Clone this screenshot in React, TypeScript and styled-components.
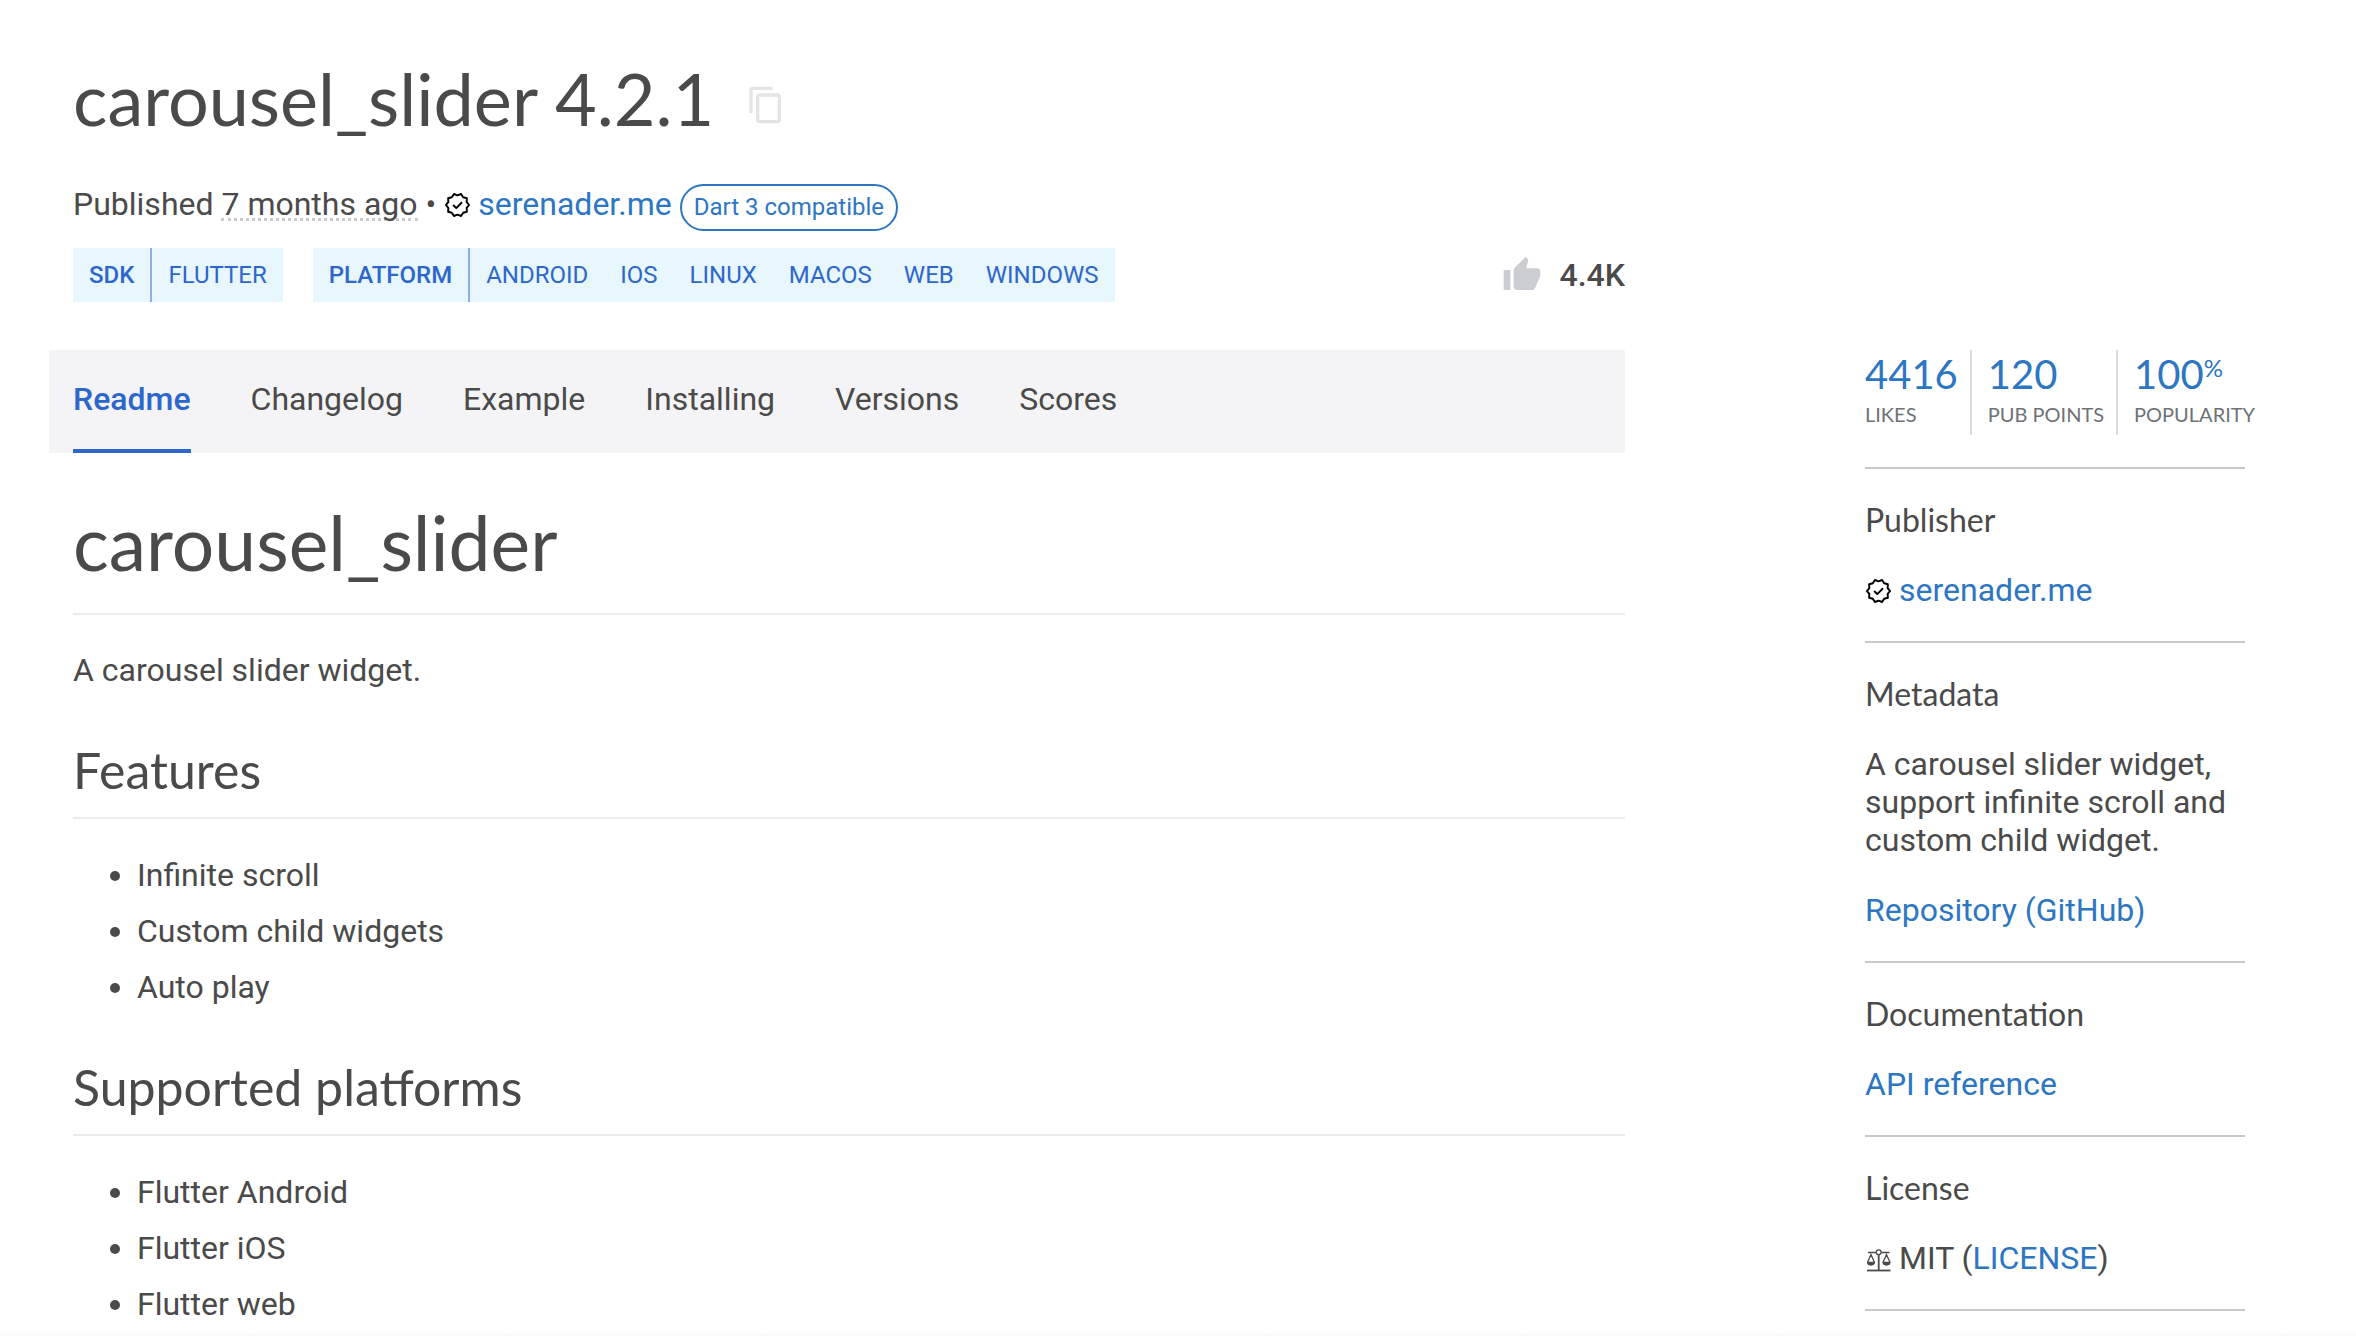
import React from "react";
import styled, { createGlobalStyle, css } from "styled-components";

const color = {
  text: "#4a4a4a",
  link: "#2d76c2",
  accent: "#2d67cc",
  chip: "#e8f6fe",
  chipLine: "#8dafe3",
  tabs: "#f4f4f6",
  rule: "#eaebef",
  sideRule: "#c7c8c9",
  statRule: "#dcdcdc",
  label: "#6e7277",
};

const display = `Lato, "Open Sans", sans-serif`;

const GlobalStyle = createGlobalStyle`
  * { box-sizing: border-box; }
  body {
    margin: 0;
    background: #fff;
    color: ${color.text};
    font: 400 32px/38px Roboto, "Noto Sans", sans-serif;
  }
  h1, h2, h3, p, ul, dl, dd { margin: 0; padding: 0; }
`;

const Page = styled.div`
  min-height: 100vh;
  display: flex;
  flex-direction: column;
`;

const Columns = styled.div`
  flex: 1;
  display: flex;
  align-items: flex-start;
  gap: 240px;
  padding: 55px 111px 0 49px;
`;

const Main = styled.main`
  flex: 1;
  min-width: 0;
`;

const Header = styled.header`
  padding-left: 24px;
`;

const TitleRow = styled.div`
  display: flex;
  align-items: center;
  gap: 32px;
`;

const Title = styled.h1`
  font: 400 72px/86px ${display};
`;

const CopyButton = styled.button`
  display: flex;
  padding: 0;
  margin-top: 14px;
  border: 0;
  background: none;
  color: #e4e4e4;
  cursor: pointer;
`;

const Link = styled.a`
  color: ${color.link};
  text-decoration: none;
`;

const Meta = styled.div`
  display: flex;
  align-items: baseline;
  gap: 8px;
  margin-top: 43px;
`;

const Age = styled.abbr`
  text-decoration: none;
  border-bottom: 3px dotted #cbcbcb;
  line-height: 28px;
  display: inline-block;
`;

const PublisherLink = styled(Link)`
  display: inline-flex;
  align-items: baseline;
  gap: 7px;

  svg {
    align-self: center;
    margin-top: 2px;
  }
`;

const Pill = styled.a`
  padding: 0 12px;
  border: 2px solid ${color.link};
  border-radius: 24px;
  color: ${color.link};
  font-size: 24px;
  line-height: 43px;
  text-decoration: none;
`;

const TagRow = styled.div`
  display: flex;
  align-items: center;
  gap: 30px;
  margin-top: 17px;
`;

const TagGroup = styled.div`
  display: flex;
  background: ${color.chip};
  color: ${color.accent};
  font-size: 24px;
  line-height: 54px;
`;

const TagName = styled.span`
  padding: 0 16px;
  border-right: 2px solid ${color.chipLine};
  font-weight: 500;
`;

const Tag = styled.a`
  padding: 0 16px;
  color: inherit;
  text-decoration: none;
`;

const LikeButton = styled.button`
  display: flex;
  align-items: center;
  gap: 18px;
  margin-left: auto;
  padding: 0;
  border: 0;
  background: none;
  color: inherit;
  font: inherit;
  font-weight: 500;
  cursor: pointer;
`;

const Tabs = styled.nav`
  display: flex;
  gap: 60px;
  margin-top: 48px;
  padding: 0 24px;
  background: ${color.tabs};
`;

const Tab = styled.a<{ $active?: boolean }>`
  padding: 30px 0 31px;
  border-bottom: 4px solid transparent;
  color: inherit;
  text-decoration: none;
  ${(p) =>
    p.$active &&
    css`
      border-color: ${color.accent};
      color: ${color.accent};
      font-weight: 500;
    `}
`;

const Readme = styled.article`
  padding: 46px 0 0 24px;
`;

const ReadmeTitle = styled.h1`
  padding-bottom: 28px;
  border-bottom: 2px solid ${color.rule};
  font: 400 75px/86px ${display};
`;

const Lead = styled.p`
  margin-top: 31px;
  line-height: 48px;
`;

const ReadmeHeading = styled.h2`
  margin-top: 47px;
  padding-bottom: 18px;
  border-bottom: 2px solid ${color.rule};
  font: 400 50px/58px ${display};
`;

const Bullets = styled.ul`
  display: flex;
  flex-direction: column;
  gap: 8px;
  margin-top: 32px;
  padding-left: 64px;
  line-height: 48px;
`;

const Sidebar = styled.aside`
  flex: none;
  width: 380px;
  padding-top: 295px;
`;

const Stats = styled.dl`
  display: flex;
  height: 85px;
  margin-bottom: 32px;
  font-family: ${display};
`;

const Stat = styled.div`
  display: flex;
  flex-direction: column-reverse;
  justify-content: flex-end;
  padding-right: 12px;
  white-space: nowrap;
  & + & {
    padding-left: 16px;
    border-left: 2px solid ${color.statRule};
  }
`;

const StatLabel = styled.dt`
  color: ${color.label};
  font-size: 20px;
  line-height: 32px;
`;

const StatValue = styled.dd`
  color: ${color.link};
  font-size: 40px;
  line-height: 48px;
`;

const Percent = styled.span`
  font-size: 24px;
  line-height: 24px;
  vertical-align: 12px;
`;

const Section = styled.section`
  display: flex;
  flex-direction: column;
  align-items: flex-start;
  gap: 32px;
  padding: 32px 0;
  border-top: 2px solid ${color.sideRule};
  &:last-child {
    border-bottom: 2px solid ${color.sideRule};
  }
`;

const SectionTitle = styled.h3`
  font: 400 32px/38px ${display};
`;

const IconLine = styled.div`
  display: flex;
  align-items: center;
  gap: 7px;
`;

const BottomEdge = styled.div`
  height: 5px;
  background: linear-gradient(#fff, #f8f8f8);
`;

const starburst = Array.from({ length: 20 }, (_, i) => {
  const angle = (i * Math.PI) / 10;
  const r = i % 2 ? 10 : 12;
  return `${(14 + r * Math.cos(angle)).toFixed(2)},${(14 + r * Math.sin(angle)).toFixed(2)}`;
}).join(" ");

const VerifiedIcon = () => (
  <svg width="27" height="28" viewBox="0 0 28 28" fill="none" stroke="#000" strokeWidth="2" strokeLinejoin="round" aria-hidden="true">
    <polygon points={starburst} />
    <path d="M9.5 14l3.2 3.2 6-6" />
  </svg>
);

const CopyIcon = () => (
  <svg width="40" height="40" viewBox="0 0 24 24" fill="currentColor" aria-hidden="true">
    <path d="M16 1H4c-1.1 0-2 .9-2 2v14h2V3h12V1zm3 4H8c-1.1 0-2 .9-2 2v14c0 1.1.9 2 2 2h11c1.1 0 2-.9 2-2V7c0-1.1-.9-2-2-2zm0 16H8V7h11v14z" />
  </svg>
);

const ThumbIcon = () => (
  <svg width="40" height="40" viewBox="0 0 24 24" fill="#cccdd2" aria-hidden="true">
    <path d="M1 21h4V9H1v12zm22-11c0-1.1-.9-2-2-2h-6.31l.95-4.57.03-.32c0-.41-.17-.79-.44-1.06L14.17 1 7.59 7.59C7.22 7.95 7 8.45 7 9v10c0 1.1.9 2 2 2h9c.83 0 1.54-.5 1.84-1.22l3.02-7.05c.09-.23.14-.47.14-.73v-2z" />
  </svg>
);

const ScalesIcon = () => (
  <svg width="27" height="28" viewBox="0 0 27 28" fill="none" stroke={color.text} strokeWidth="1.3" aria-hidden="true">
    <path d="M2 26.5h23.500" strokeWidth="1.800" />
    <path d="M13.700 11v15" strokeWidth="1.800" />
    <path d="M3 8.500h8M16.500 8.500h8" strokeWidth="1.500" />
    <circle cx="13.700" cy="8.200" r="2.400" />
    <path d="M6 10.500L2.700 18c0 3.800 6.600 3.800 6.600 0zM21.500 10.500L18.200 18c0 3.800 6.600 3.800 6.600 0z" />
    <path d="M2.700 18.300h6.600c-.3 3.300-6.300 3.300-6.600 0zM18.200 18.300h6.600c-.3 3.300-6.300 3.300-6.600 0z" fill={color.text} />
  </svg>
);

const tagGroups = [
  { name: "SDK", tags: ["FLUTTER"] },
  { name: "PLATFORM", tags: ["ANDROID", "IOS", "LINUX", "MACOS", "WEB", "WINDOWS"] },
];

const tabs = ["Readme", "Changelog", "Example", "Installing", "Versions", "Scores"];

const readmeSections = [
  { heading: "Features", items: ["Infinite scroll", "Custom child widgets", "Auto play"] },
  { heading: "Supported platforms", items: ["Flutter Android", "Flutter iOS", "Flutter web"] },
];

const Publisher = () => (
  <PublisherLink href="#publisher">
    <VerifiedIcon />
    serenader.me
  </PublisherLink>
);

export default function App() {
  return (
    <Page>
      <GlobalStyle />
      <Columns>
        <Main>
          <Header>
            <TitleRow>
              <Title>carousel_slider 4.2.1</Title>
              <CopyButton type="button" aria-label="Copy">
                <CopyIcon />
              </CopyButton>
            </TitleRow>
            <Meta>
              <span>
                Published <Age>7 months ago</Age> •
              </span>
              <Publisher />
              <Pill href="#dart3">Dart 3 compatible</Pill>
            </Meta>
            <TagRow>
              {tagGroups.map((group) => (
                <TagGroup key={group.name}>
                  <TagName>{group.name}</TagName>
                  {group.tags.map((tag) => (
                    <Tag key={tag} href="#tag">
                      {tag}
                    </Tag>
                  ))}
                </TagGroup>
              ))}
              <LikeButton type="button">
                <ThumbIcon />
                4.4K
              </LikeButton>
            </TagRow>
          </Header>
          <Tabs>
            {tabs.map((tab, i) => (
              <Tab key={tab} href="#tab" $active={i === 0}>
                {tab}
              </Tab>
            ))}
          </Tabs>
          <Readme>
            <ReadmeTitle>carousel_slider</ReadmeTitle>
            <Lead>A carousel slider widget.</Lead>
            {readmeSections.map((section) => (
              <React.Fragment key={section.heading}>
                <ReadmeHeading>{section.heading}</ReadmeHeading>
                <Bullets>
                  {section.items.map((item) => (
                    <li key={item}>{item}</li>
                  ))}
                </Bullets>
              </React.Fragment>
            ))}
          </Readme>
        </Main>
        <Sidebar>
          <Stats>
            <Stat>
              <StatLabel>LIKES</StatLabel>
              <StatValue>4416</StatValue>
            </Stat>
            <Stat>
              <StatLabel>PUB POINTS</StatLabel>
              <StatValue>120</StatValue>
            </Stat>
            <Stat>
              <StatLabel>POPULARITY</StatLabel>
              <StatValue>
                100<Percent>%</Percent>
              </StatValue>
            </Stat>
          </Stats>
          <Section>
            <SectionTitle>Publisher</SectionTitle>
            <Publisher />
          </Section>
          <Section>
            <SectionTitle>Metadata</SectionTitle>
            <p>A carousel slider widget, support infinite scroll and custom child widget.</p>
            <Link href="#repository">Repository (GitHub)</Link>
          </Section>
          <Section>
            <SectionTitle>Documentation</SectionTitle>
            <Link href="#api">API reference</Link>
          </Section>
          <Section>
            <SectionTitle>License</SectionTitle>
            <IconLine>
              <ScalesIcon />
              <span>
                MIT (<Link href="#license">LICENSE</Link>)
              </span>
            </IconLine>
          </Section>
        </Sidebar>
      </Columns>
      <BottomEdge />
    </Page>
  );
}
